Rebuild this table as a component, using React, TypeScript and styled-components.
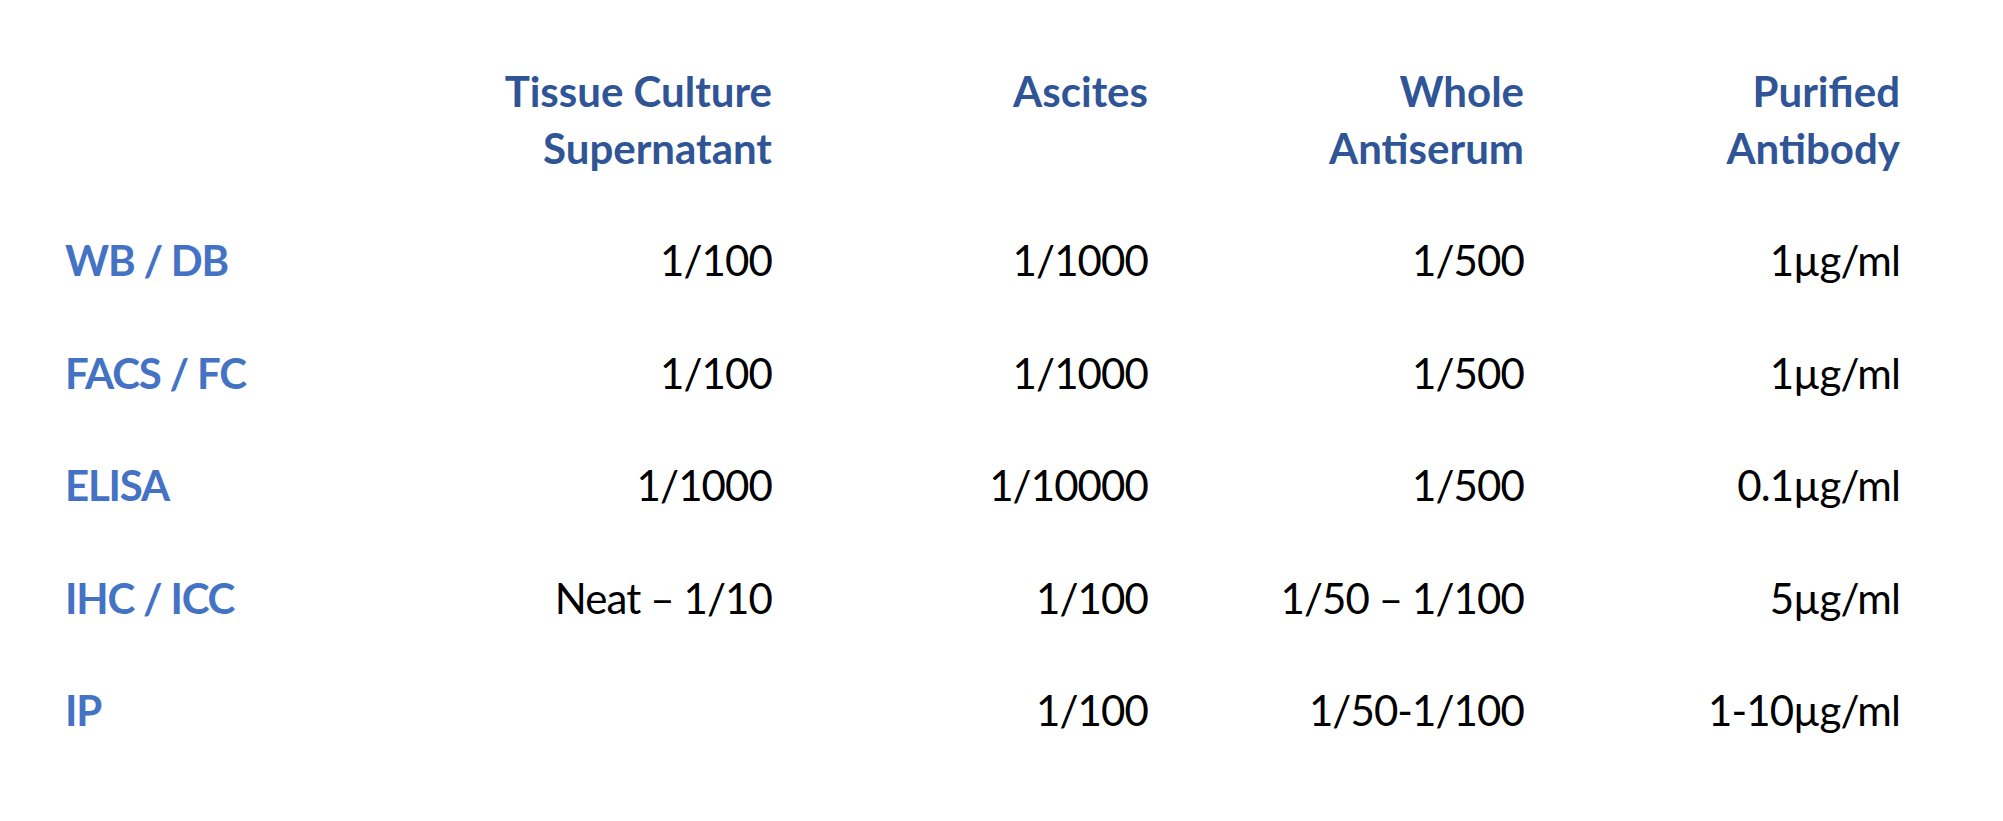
import React from 'react';
import styled, { createGlobalStyle } from 'styled-components';

type Row = {
  label: string;
  values: string[];
};

const columns = [
  ['Tissue Culture', 'Supernatant'],
  ['Ascites'],
  ['Whole', 'Antiserum'],
  ['Purified', 'Antibody'],
];

const rows: Row[] = [
  { label: 'WB / DB', values: ['1/100', '1/1000', '1/500', '1µg/ml'] },
  { label: 'FACS / FC', values: ['1/100', '1/1000', '1/500', '1µg/ml'] },
  { label: 'ELISA', values: ['1/1000', '1/10000', '1/500', '0.1µg/ml'] },
  { label: 'IHC / ICC', values: ['Neat – 1/10', '1/100', '1/50 – 1/100', '5µg/ml'] },
  { label: 'IP', values: ['', '1/100', '1/50-1/100', '1-10µg/ml'] },
];

const App: React.FC = () => {
  return (
    <>
      <GlobalStyle />
      <Page>
        <Table>
          <HeaderRow>
            <Corner />
            {columns.map((lines, i) => (
              <HeaderCell key={i}>
                {lines.map((line) => (
                  <span key={line}>{line}</span>
                ))}
              </HeaderCell>
            ))}
          </HeaderRow>
          {rows.map((row) => (
            <BodyRow key={row.label}>
              <Label>{row.label}</Label>
              {row.values.map((value, i) => (
                <Value key={i}>{value}</Value>
              ))}
            </BodyRow>
          ))}
        </Table>
      </Page>
    </>
  );
};

export default App;

const GlobalStyle = createGlobalStyle`
  html, body {
    margin: 0;
    padding: 0;
    background: #ffffff;
  }
  body {
    font-family: 'Lato', 'Open Sans', sans-serif;
  }
`;

const Page = styled.div`
  width: 2003px;
  height: 821px;
  background: #ffffff;
  padding: 63px 0 0 65px;
  box-sizing: border-box;
`;

const Table = styled.div`
  display: flex;
  flex-direction: column;
`;

const gridColumns = '331px 376px 376px 376px 376px';

const HeaderRow = styled.div`
  display: grid;
  grid-template-columns: ${gridColumns};
  margin-bottom: 27px;
`;

const Corner = styled.div``;

const HeaderCell = styled.div`
  display: flex;
  flex-direction: column;
  align-items: flex-end;
  font-size: 42px;
  font-weight: 700;
  line-height: 57px;
  color: #2f5597;
  white-space: nowrap;
`;

const BodyRow = styled.div`
  display: grid;
  grid-template-columns: ${gridColumns};
  align-items: center;
  height: 112.5px;
`;

const Label = styled.div`
  font-size: 42px;
  font-weight: 700;
  letter-spacing: -1.2px;
  color: #4472c4;
  white-space: nowrap;
`;

const Value = styled.div`
  font-size: 42px;
  font-weight: 400;
  letter-spacing: -0.9px;
  color: #000000;
  text-align: right;
  white-space: nowrap;
`;
